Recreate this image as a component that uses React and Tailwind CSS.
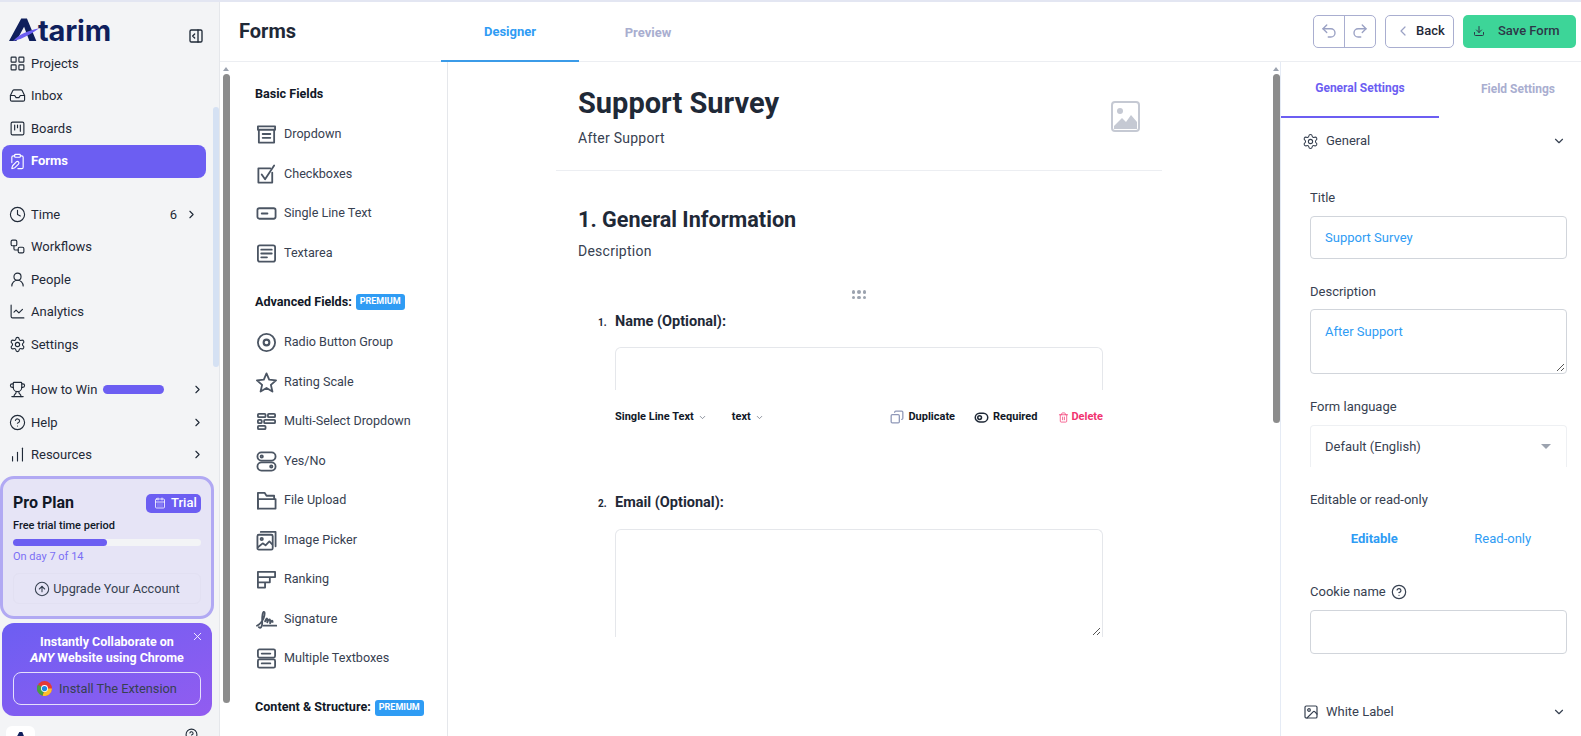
import {
  LayoutGrid, Inbox, SquareKanban, ClipboardPen, Clock, Workflow, UserRound, ChartLine, Settings,
  Trophy, CircleHelp, ChartNoAxesColumnIncreasing, ChevronRight, ChevronDown, ChevronLeft, CalendarDays,
  CircleArrowUp, X, Undo2, Redo2, Download, Image, Copy, Trash2, ToggleLeft, PanelRightOpen,
} from 'lucide-react';

const topNav = [
  { name: 'Projects', Icon: LayoutGrid },
  { name: 'Inbox', Icon: Inbox },
  { name: 'Boards', Icon: SquareKanban },
];

const midNav = [
  { name: 'Workflows', Icon: Workflow },
  { name: 'People', Icon: UserRound },
  { name: 'Analytics', Icon: ChartLine },
  { name: 'Settings', Icon: Settings },
];

function NavRow({ name, Icon, children }) {
  return (
    <div className="h-[32.5px] flex items-center pl-[9px] pr-[21px] text-[13px] text-[#1f2937]">
      <Icon className="w-[17px] h-[17px] mr-[5px] shrink-0" strokeWidth={1.6} />
      <span>{name}</span>
      {children}
    </div>
  );
}

function LogoMark({ className }) {
  return (
    <svg className={className} viewBox="0 0 38 28" fill="none">
      <path d="M0 27.5 L15 0 L22 0 L33.5 27.5 L25 27.5 L18.5 10 L9 27.5 Z" fill="#0f1f5c" />
      <path d="M5 27.5 C12 20 22 15 37 12 C28 18 22 22 14 25 Z" fill="#6c5ef2" />
    </svg>
  );
}

function Sidebar() {
  return (
    <aside className="w-[220px] shrink-0 h-full bg-[#f3f4f6] border-r border-[#e5e7eb] flex overflow-hidden">
      <div className="w-[213px] shrink-0 relative">
        <div className="h-[45px] flex items-start pl-[9px] pt-[14px]">
          <LogoMark className="w-[31px] h-[28px]" />
          <span className="font-['Inter',sans-serif] font-bold text-[#0f1f5c] text-[29px] leading-[28px] tracking-[-0.2px] ml-[-2px] mt-[1px]">tarim</span>
          <PanelRightOpen className="w-[16px] h-[16px] ml-auto mr-[9px] mt-[12px] text-[#1f2937]" strokeWidth={2} />
        </div>
        {topNav.map((n) => <NavRow key={n.name} {...n} />)}
        <div className="ml-[2px] w-[204px] h-[33px] rounded-lg bg-[#6c5ef2] flex items-center pl-[7px] text-[13px] font-bold text-white">
          <ClipboardPen className="w-[17px] h-[17px] mr-[5px]" strokeWidth={1.6} />
          Forms
        </div>
        <div className="h-[20.5px]" />
        <NavRow name="Time" Icon={Clock}>
          <span className="ml-auto mr-[8px]">6</span>
          <ChevronRight className="w-[13px] h-[13px] mr-[-6px]" strokeWidth={2} />
        </NavRow>
        {midNav.map((n) => <NavRow key={n.name} {...n} />)}
        <div className="h-[13px]" />
        <NavRow name="How to Win" Icon={Trophy}>
          <span className="ml-[6px] w-[61px] h-[9px] rounded-full bg-[#6c5ef2]" />
          <ChevronRight className="ml-auto w-[13px] h-[13px] mr-[-12px]" strokeWidth={2} />
        </NavRow>
        <NavRow name="Help" Icon={CircleHelp}>
          <ChevronRight className="ml-auto w-[13px] h-[13px] mr-[-12px]" strokeWidth={2} />
        </NavRow>
        <NavRow name="Resources" Icon={ChartNoAxesColumnIncreasing}>
          <ChevronRight className="ml-auto w-[13px] h-[13px] mr-[-12px]" strokeWidth={2} />
        </NavRow>

        <div className="mt-[5px] w-[214px] h-[143px] rounded-[14px] border-[3px] border-[#b1a9f3] bg-[#e6e4f6] pt-[14px] pl-[10px] pr-[10px]">
          <div className="flex items-center justify-between h-[20px]">
            <span className="text-[16px] font-bold text-[#111827] leading-none">Pro Plan</span>
            <span className="flex items-center h-[19px] w-[55px] rounded-[5px] bg-[#6c5ef2] text-white text-[13px] font-medium pl-[8px]">
              <CalendarDays className="w-[12px] h-[12px] mr-[5px]" strokeWidth={1.6} />Trial
            </span>
          </div>
          <div className="mt-[4px] text-[11px] leading-[18px] font-medium text-[#111827]">Free trial time period</div>
          <div className="mt-[4px] h-[7px] rounded-full bg-[#f3f4f6]">
            <div className="h-full w-1/2 rounded-full bg-[#6c5ef2]" />
          </div>
          <div className="mt-[2px] text-[11px] leading-[18px] text-[#7b6ff5]">On day 7 of 14</div>
          <div className="mt-[7px] h-[31px] rounded-md border border-[#e2e0f2] flex items-center justify-center text-[12.7px] text-[#374151]">
            <CircleArrowUp className="w-[16px] h-[16px] mr-[3px]" strokeWidth={1.6} />
            Upgrade Your Account
          </div>
        </div>

        <div className="relative mt-[4px] ml-[2px] w-[210px] h-[93px] rounded-xl bg-gradient-to-br from-[#6c5ef2] to-[#925cf0] px-[11px] pt-[11px]">
          <X className="absolute right-[8px] top-[7px] w-[13px] h-[13px] text-white" strokeWidth={1.6} />
          <div className="text-center text-white text-[12.5px] font-bold leading-[16px]">
            Instantly Collaborate on<br /><i>ANY</i> Website using Chrome
          </div>
          <div className="mt-[6px] h-[33px] rounded-lg border border-[#e5e0fb] flex items-center justify-center text-[12.8px] text-[#374151]">
            <svg className="w-[15px] h-[15px] mr-[7px]" viewBox="0 0 24 24">
              <circle cx="12" cy="12" r="12" fill="#e53935" />
              <path d="M12 12 L24 12 A12 12 0 0 1 9 23.6 Z" fill="#fbc02d" />
              <path d="M12 12 L9 23.6 A12 12 0 0 1 1.5 6 Z" fill="#43a047" />
              <circle cx="12" cy="12" r="5.5" fill="#fff" />
              <circle cx="12" cy="12" r="4.2" fill="#1e88e5" />
            </svg>
            Install The Extension
          </div>
        </div>

        <div className="mt-[10px] ml-[6px] w-[29px] h-[29px] rounded-md bg-white flex justify-center pt-[5px]">
          <LogoMark className="w-[16px] h-[14px]" />
        </div>
        <CircleHelp className="absolute right-[15px] top-[726px] w-[13px] h-[13px] text-[#1f2937]" />
      </div>
      <div className="w-[6px] shrink-0">
        <div className="mt-[105px] h-[260px] rounded-full bg-[#d5e1f3]" />
      </div>
    </aside>
  );
}

/* palette icons, stroked to fit a 22x22 box */
const stroke = { fill: 'none', stroke: 'currentColor', strokeWidth: 1.9, strokeLinejoin: 'round', strokeLinecap: 'round' };
const paletteIcons = {
  dropdown: <g {...stroke}><path d="M2 2.5h18v3.5h-18zM3 6v13.5h16V6M7 10.5h8M7 14.5h8" /></g>,
  checkbox: <g {...stroke}><path d="M17 9v10.5H2.5V4.5H15" /><path d="M6 11l3.5 5L19 1.5" /></g>,
  single: <g {...stroke}><rect x="1.5" y="5.5" width="19" height="11" rx="2" /><path d="M6 11h6" /></g>,
  textarea: <g {...stroke}><rect x="2" y="2.5" width="18" height="17" rx="2" /><path d="M5.5 7h11M5.5 11h11M5.5 15h6" /></g>,
  radio: <g {...stroke}><circle cx="11" cy="11" r="9" /><circle cx="11" cy="11" r="3" strokeWidth="2.2" /></g>,
  star: <g {...stroke}><path d="M11 1.5 L13.8 8 L21 8.8 L15.6 13.5 L17.2 20.5 L11 16.8 L4.8 20.5 L6.4 13.5 L1 8.8 L8.2 8 Z" /></g>,
  multi: <g {...stroke}><rect x="2" y="3" width="8" height="3.5" rx="1" /><rect x="12.5" y="3" width="7.5" height="3.5" rx="1" /><rect x="2" y="9.2" width="4" height="3.5" rx="1" /><rect x="8.5" y="9.2" width="11.5" height="3.5" rx="1" /><rect x="2" y="15.5" width="8" height="3.5" rx="1" /></g>,
  yesno: <g {...stroke}><rect x="1.5" y="1.5" width="19" height="8.5" rx="4.2" /><circle cx="6" cy="5.7" r="1.2" /><rect x="1.5" y="12" width="19" height="8.5" rx="4.2" /><circle cx="16" cy="16.2" r="1.2" /></g>,
  folder: <g {...stroke}><path d="M2 19.5V3h7l2 3h8v3.5" /><path d="M2 9.5h18.5v10H2z" /></g>,
  picker: <g {...stroke}><path d="M5 2h15.5v15" /><rect x="1.5" y="5" width="16" height="15.5" rx="1.5" /><circle cx="6" cy="9.5" r="1.2" /><path d="M2 18l5-4 3 2 4-4 3 3" /></g>,
  ranking: <g {...stroke}><path d="M2 3h18v5.5H2zM2 8.5h12.5V14H2zM2 14h7.5v5.5H2z" /></g>,
  signature: <g {...stroke}><path d="M1 17.5C4 16 6.5 13 8 9.5C9.3 6 9.5 2.5 8 3C6 4 6.5 12 6.5 15C6.5 19.5 4.5 20.5 3 19" /><path d="M9.5 13c1-3 2.3-4 2.3-2v3c1-3 3-4 3-2v3c1-3 2.6-3.500 2.600-1.500" /><path d="M8 17.500h13.500" /></g>,
  textboxes: <g {...stroke}><rect x="2" y="1.5" width="18" height="8.5" rx="1.5" /><path d="M6 5.8h9" /><rect x="2" y="12" width="18" height="8.5" rx="1.5" /><path d="M6 16.2h9" /></g>,
};

function PaletteItem({ name, icon }) {
  return (
    <div className="h-[39.5px] flex items-center text-[12.6px] text-[#374151]">
      <span className="w-[28px] shrink-0 text-[#4b5563]">
        <svg className="w-[21px] h-[21px]" viewBox="0 0 22 22">{paletteIcons[icon]}</svg>
      </span>
      {name}
    </div>
  );
}

function Premium() {
  return (
    <span className="ml-[4px] inline-flex items-center h-[16px] px-[4px] rounded-[3px] bg-[#2f9cf4] text-white text-[9px] font-bold">PREMIUM</span>
  );
}

function Scrollbar({ thumbHeight }) {
  return (
    <div className="w-[8px] shrink-0 flex flex-col items-center pt-[5px]">
      <div className="w-0 h-0 border-l-[3.5px] border-r-[3.5px] border-b-[4px] border-l-transparent border-r-transparent border-b-[#9ca3af]" />
      <div className={`${thumbHeight} mt-[3px] w-[7px] rounded-full bg-[#8c8c8c]`} />
    </div>
  );
}

function Palette() {
  return (
    <div className="w-[228px] shrink-0 border-r border-[#e5e7eb] flex overflow-hidden pl-[2px]">
      <Scrollbar thumbHeight="h-[629px]" />
      <div className="pl-[26px]">
        <div className="mt-[24px] -ml-[1px] h-[16px] flex items-center text-[12.6px] font-bold text-[#111827]">Basic Fields</div>
        <div className="mt-[13px]">
          <PaletteItem name="Dropdown" icon="dropdown" />
          <PaletteItem name="Checkboxes" icon="checkbox" />
          <PaletteItem name="Single Line Text" icon="single" />
          <PaletteItem name="Textarea" icon="textarea" />
        </div>
        <div className="mt-[21px] -ml-[1px] h-[16px] flex items-center text-[12.6px] font-bold text-[#111827]">Advanced Fields: <Premium /></div>
        <div className="mt-[13px]">
          <PaletteItem name="Radio Button Group" icon="radio" />
          <PaletteItem name="Rating Scale" icon="star" />
          <PaletteItem name="Multi-Select Dropdown" icon="multi" />
          <PaletteItem name="Yes/No" icon="yesno" />
          <PaletteItem name="File Upload" icon="folder" />
          <PaletteItem name="Image Picker" icon="picker" />
          <PaletteItem name="Ranking" icon="ranking" />
          <PaletteItem name="Signature" icon="signature" />
          <PaletteItem name="Multiple Textboxes" icon="textboxes" />
        </div>
        <div className="mt-[21px] -ml-[1px] h-[16px] flex items-center text-[12.6px] font-bold text-[#111827]">Content &amp; Structure: <Premium /></div>
      </div>
    </div>
  );
}

function Canvas() {
  return (
    <div className="flex-1 overflow-hidden">
      <div className="ml-[108px] w-[606px]">
        <div className="h-[109px] border-b border-[#eceef2] pl-[22px] relative">
          <h1 className="pt-[21px] text-[29px] leading-[40px] font-bold text-[#1f2937]">Support Survey</h1>
          <p className="mt-[5px] text-[14px] leading-[20px] tracking-[0.25px] text-[#374151]">After Support</p>
          <svg className="absolute right-[22px] top-[39px] w-[29px] h-[31px] text-[#c5c9d3]" viewBox="0 0 29 31">
            <rect x="1" y="1" width="27" height="29" rx="3" fill="none" stroke="currentColor" strokeWidth="2" />
            <circle cx="9" cy="10" r="3" fill="currentColor" />
            <path d="M3 25 L11 17 L15 21 L20 14 L26 21 V28 H3 Z" fill="currentColor" />
          </svg>
        </div>
        <div className="pl-[22px]">
          <h2 className="mt-[33px] text-[21.6px] leading-[32px] font-bold text-[#1f2937]">1. General Information</h2>
          <p className="mt-[5px] text-[14px] leading-[20px] tracking-[0.25px] text-[#374151]">Description</p>
        </div>
        <div className="mt-[29px] flex justify-center">
          <div className="grid grid-cols-3 gap-[2px]">
            {[0, 1, 2, 3, 4, 5].map((i) => <span key={i} className="w-[3.5px] h-[3.5px] rounded-full bg-[#9ca3af]" />)}
          </div>
        </div>
        <div className="pl-[42px] pr-[59px]">
          <div className="mt-[13px] h-[20px] flex items-center relative text-[14.500px] font-bold text-[#1f2937] pl-[17px]">
            <span className="absolute left-0 text-[10px] font-bold">1.</span>
            Name (Optional):
          </div>
          <div className="mt-[15px] ml-[17px] h-[43px] rounded-t-md border border-b-0 border-[#e5e7eb]" />
          <div className="mt-[17px] ml-[17px] h-[20px] flex items-center text-[11px] font-bold text-[#111827]">
            <span>Single Line Text</span>
            <ChevronDown className="w-[9px] h-[9px] ml-[4px] text-[#6b7280]" strokeWidth={2} />
            <span className="ml-[25px]">text</span>
            <ChevronDown className="w-[9px] h-[9px] ml-[4px] text-[#6b7280]" strokeWidth={2} />
            <Copy className="ml-auto w-[14px] h-[14px] text-[#8f98b8] -scale-x-100" strokeWidth={2.2} />
            <span className="ml-[4px]">Duplicate</span>
            <ToggleLeft className="ml-[19px] w-[15px] h-[15px] text-[#1f2937]" strokeWidth={2.4} />
            <span className="ml-[4px]">Required</span>
            <Trash2 className="ml-[21px] w-[11px] h-[11px] text-[#f43f78]" strokeWidth={1.7} />
            <span className="ml-[2px] text-[#f1336f]">Delete</span>
          </div>
          <div className="mt-[66px] h-[20px] flex items-center relative text-[14.500px] font-bold text-[#1f2937] pl-[17px]">
            <span className="absolute left-0 text-[10px] font-bold">2.</span>
            Email (Optional):
          </div>
          <div className="relative mt-[16px] ml-[17px] h-[108px] rounded-t-md border border-b-0 border-[#e5e7eb]">
            <svg className="absolute right-[1px] bottom-[1px] w-[9px] h-[9px]" viewBox="0 0 9 9"><path d="M1 8 L8 1 M5 8 L8 5" stroke="#555" fill="none" /></svg>
          </div>
        </div>
      </div>
    </div>
  );
}

function FieldLabel({ children, className = '' }) {
  return <div className={`h-[18px] flex items-center text-[13px] text-[#374151] ${className}`}>{children}</div>;
}

function RightPanel() {
  return (
    <div className="w-[301px] shrink-0 border-l border-[#e5ebf5] overflow-hidden">
      <div className="h-[56px] flex text-[12px] font-bold">
        <div className="w-[158px] h-[56px] border-b-2 border-[#6c5ef2] text-[#6c5ef2] flex justify-center pt-[17px]">General Settings</div>
        <div className="flex-1 flex justify-center pt-[18px] pl-[16px] text-[#a9aed0]">Field Settings</div>
      </div>
      <div className="mt-[11px] h-[24px] flex items-center pl-[21px] pr-[15px] text-[13px] text-[#374151]">
        <Settings className="w-[17px] h-[17px] mr-[7px]" strokeWidth={1.5} />
        General
        <ChevronDown className="ml-auto w-[14px] h-[14px]" strokeWidth={2} />
      </div>
      <div className="pl-[29px] pr-[14px]">
        <FieldLabel className="mt-[36px]">Title</FieldLabel>
        <div className="mt-[9px] h-[43px] rounded border border-[#d1d5db] flex items-center pl-[14px] text-[13px] text-[#2f9cf4]">Support Survey</div>
        <FieldLabel className="mt-[24px]">Description</FieldLabel>
        <div className="relative mt-[8px] h-[65px] rounded border border-[#d1d5db] pl-[14px] pt-[13px] text-[13px] leading-[18px] text-[#2f9cf4]">
          After Support
          <svg className="absolute right-[1px] bottom-[1px] w-[9px] h-[9px]" viewBox="0 0 9 9"><path d="M1 8 L8 1 M5 8 L8 5" stroke="#555" fill="none" /></svg>
        </div>
        <FieldLabel className="mt-[24px]">Form language</FieldLabel>
        <div className="mt-[9px] h-[42px] rounded-t border border-b-0 border-[#eef0f3] flex items-center pl-[14px] pr-[15px] text-[13px] text-[#374151]">
          Default (English)
          <span className="ml-auto w-0 h-0 border-l-[5px] border-r-[5px] border-t-[5px] border-l-transparent border-r-transparent border-t-[#9ca3af]" />
        </div>
        <FieldLabel className="mt-[24px]">Editable or read-only</FieldLabel>
        <div className="mt-[21px] h-[18px] flex items-center text-[13px] text-[#2f9cf4]">
          <span className="w-[129px] text-center font-bold">Editable</span>
          <span className="w-[129px] text-center">Read-only</span>
        </div>
        <FieldLabel className="mt-[35px]">
          Cookie name
          <CircleHelp className="ml-[5px] w-[16px] h-[16px]" strokeWidth={1.8} />
        </FieldLabel>
        <div className="mt-[9px] h-[44px] rounded border border-[#d1d5db]" />
      </div>
      <div className="mt-[46px] h-[24px] flex items-center pl-[22px] pr-[15px] text-[13px] text-[#374151]">
        <Image className="w-[16px] h-[16px] mr-[7px]" strokeWidth={1.8} />
        White Label
        <ChevronDown className="ml-auto w-[14px] h-[14px]" strokeWidth={2} />
      </div>
    </div>
  );
}

function Header() {
  return (
    <header className="h-[60px] shrink-0 border-b border-[#eceef2] flex items-center pl-[19px] pr-[5px]">
      <div className="w-[202px] -mt-[2px] text-[20px] font-bold text-[#1f2937]">Forms</div>
      <div className="w-[138px] h-[60px] border-b-2 border-[#3b9be8] -mb-px flex justify-center pt-[20px] text-[13px] font-bold text-[#2f9cf4]">Designer</div>
      <div className="w-[138px] h-[60px] flex justify-center pt-[21px] text-[13px] font-bold text-[#a9aed0]">Preview</div>
      <div className="ml-auto flex items-center h-[33px] -mt-[1px]">
        <div className="flex w-[63px] h-[33px] rounded-[5px] border border-[#a9aed0]">
          <div className="w-[31px] border-r border-[#a9aed0] flex items-center justify-center">
            <Undo2 className="w-[18px] h-[18px] text-[#9aa1c4]" strokeWidth={1.8} />
          </div>
          <div className="flex-1 flex items-center justify-center">
            <Redo2 className="w-[18px] h-[18px] text-[#9aa1c4]" strokeWidth={1.8} />
          </div>
        </div>
        <div className="ml-[9px] w-[69px] h-[33px] rounded-[5px] border border-[#a9aed0] flex items-center pl-[9px] text-[13px] font-medium text-[#1f2937]">
          <ChevronLeft className="w-[16px] h-[16px] text-[#9aa1c4] mr-[5px]" strokeWidth={1.8} />
          Back
        </div>
        <div className="ml-[9px] w-[113px] h-[33px] rounded-[5px] bg-[#3dd598] flex items-center pl-[10px] text-[13px] font-medium text-[#2d3748]">
          <Download className="w-[12px] h-[12px] mr-[13px]" strokeWidth={2} />
          Save Form
        </div>
      </div>
    </header>
  );
}

export default function App() {
  return (
    <div className="h-screen w-full bg-white flex flex-col overflow-hidden font-['Roboto',sans-serif]">
      <div className="h-[2px] shrink-0 bg-[#e3e6f2]" />
      <div className="flex flex-1 min-h-0">
        <Sidebar />
        <main className="flex-1 min-w-0 flex flex-col">
          <Header />
          <div className="flex flex-1 min-h-0">
            <Palette />
            <Canvas />
            <Scrollbar thumbHeight="h-[349px]" />
            <RightPanel />
          </div>
        </main>
      </div>
    </div>
  );
}
